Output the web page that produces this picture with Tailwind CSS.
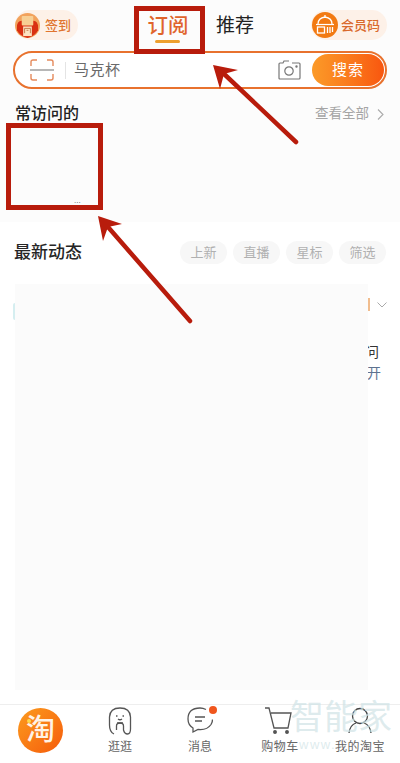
<!DOCTYPE html>
<html lang="zh">
<head>
  <meta charset="UTF-8">
  <title>订阅</title>
  <script src="https://cdn.jsdelivr.net/npm/@tailwindcss/browser@4"></script>
</head>
<body class="bg-white">
<div class="relative w-[400px] h-[763px] overflow-hidden flex flex-col bg-white font-['Liberation_Sans','Noto_Sans_CJK_SC',sans-serif]">

  <!-- top part -->
  <div class="h-[222px] bg-[#fcfcfc] shrink-0">
    <div class="h-[51px] pt-[10px] pl-[15px] pr-[13px] flex items-start justify-between">
      <div class="flex items-center h-[30px] w-[63px] rounded-full bg-[#fdf1e8]">
        <svg class="w-[25px] h-[25px] shrink-0" viewBox="0 0 26 26">
          <circle cx="13" cy="13" r="13" fill="#f2a25c"/>
          <path d="M2 15q0-7 5-7h12q5 0 5 7v3q-3 6-11 8-8-2-11-8z" fill="#d92f12"/>
          <rect x="7" y="3" width="12" height="10" rx="1" fill="#f7cf94"/>
          <rect x="8.500" y="14" width="9" height="10" fill="#fde3c2"/>
          <path d="M10 21v-5h6v5M12 18h2" stroke="#b5602c" fill="none" stroke-width=".8"/>
        </svg>
        <span class="ml-[5px] text-[13px] leading-none font-medium text-[#e0752f]">签到</span>
      </div>
      <div class="flex ml-[2px]">
        <div class="w-[62px] flex flex-col items-center">
          <span class="text-[20.500px] leading-[26px] mt-[3px] font-medium text-[#e0642c]">订阅</span>
          <span class="mt-[1px] w-[25px] h-[2.500px] rounded-full bg-[#eda02f]"></span>
        </div>
        <span class="ml-[17px] text-[19px] leading-[26px] mt-[3px] text-[#222]">推荐</span>
      </div>
      <div class="flex items-center h-[30px] w-[76px] rounded-full bg-[#fdf1e8] pl-[1px]">
        <svg class="w-[26px] h-[26px] shrink-0" viewBox="0 0 26 26" fill="none">
          <circle cx="13" cy="13" r="13" fill="#f27a12"/>
          <path d="M6 12q0-6 7-7 7 1 7 7M13 5V3" stroke="#fff" stroke-width="1.300"/>
          <path d="M4 12.500h18" stroke="#fff" stroke-width="1.200"/>
          <rect x="5.500" y="15" width="7" height="6" stroke="#fff" stroke-width="1.300"/>
          <path d="M15.500 15v6M18 15v6M20.500 15v5" stroke="#fff" stroke-width="1.300"/>
        </svg>
        <span class="ml-[3px] text-[13px] leading-none font-medium text-[#d9692c]">会员码</span>
      </div>
    </div>

    <!-- search -->
    <div class="mx-[13px] h-[38px] rounded-full border-2 border-[#e8722e] bg-white flex items-center">
      <svg class="ml-[15px] w-[24px] h-[22px] shrink-0" viewBox="0 0 24 22" fill="none" stroke="#e58a5c" stroke-width="1.400">
        <path d="M1 7V3q0-2 2-2h4M17 1h4q2 0 2 2v4M1 15v4q0 2 2 2h4M17 21h4q2 0 2-2v-4"/>
        <path d="M0 11h24" stroke="#999"/>
      </svg>
      <span class="ml-[11px] w-px h-[17px] bg-[#e4e4e4]"></span>
      <span class="ml-[8px] text-[15px] text-[#6a6a6a] tracking-[0.5px]">马克杯</span>
      <svg class="ml-auto w-[23px] h-[20px] shrink-0" viewBox="0 0 23 20" fill="none" stroke="#777" stroke-width="1.200">
        <path d="M2 3h3l1-2h5M14 3h7q1 0 1 1v14q0 1-1 1H2q-1 0-1-1V4q0-1 1-1"/>
        <circle cx="11" cy="11" r="4.200"/>
        <circle cx="18.500" cy="6.500" r=".6" fill="#777"/>
      </svg>
      <div class="ml-[11px] mr-[1px] w-[72px] h-[32px] rounded-full bg-gradient-to-r from-[#fb9a28] to-[#f8560f] flex items-center justify-center text-[15px] text-white tracking-[1px]">搜索</div>
    </div>

    <!-- frequently visited -->
    <div class="mt-[15px] pl-[15px] pr-[16px] flex items-center justify-between">
      <span class="text-[16px] leading-[20px] font-medium text-[#222]">常访问的</span>
      <div class="flex items-center">
        <span class="text-[13.500px] leading-[20px] text-[#a5a5a5]">查看全部</span>
        <svg class="ml-[8px] w-[7px] h-[11px]" viewBox="0 0 7 11" fill="none" stroke="#aaa" stroke-width="1.100"><path d="M1 .5l5 5-5 5"/></svg>
      </div>
    </div>
  </div>

  <!-- feed -->
  <div class="flex-1 relative">
    <div class="h-[61px] pl-[14px] pr-[13px] flex items-center justify-between">
      <span class="text-[17px] font-medium text-[#262626] mt-[1px]">最新动态</span>
      <div class="flex gap-[6px] text-[13px] text-[#b0b0b0] mr-[1px]">
        <span class="w-[47px] h-[23px] rounded-full bg-[#f7f7f7] flex items-center justify-center">上新</span>
        <span class="w-[47px] h-[23px] rounded-full bg-[#f7f7f7] flex items-center justify-center">直播</span>
        <span class="w-[47px] h-[23px] rounded-full bg-[#f7f7f7] flex items-center justify-center">星标</span>
        <span class="w-[47px] h-[23px] rounded-full bg-[#f7f7f7] flex items-center justify-center">筛选</span>
      </div>
    </div>
    <span class="absolute left-[365px] top-[120px] text-[14px] leading-[20px] text-[#333]">问</span>
    <span class="absolute left-[367px] top-[141px] text-[14px] leading-[20px] text-[#5d7290]">开</span>
    <div class="absolute left-[15px] top-[62px] w-[353px] h-[406px] bg-[#fbfbfb]"></div>
    <span class="absolute left-[13px] top-[81px] w-[2px] h-[17px] rounded-l-full bg-[#d5eef0]"></span>
    <span class="absolute left-[368px] top-[76px] w-[2px] h-[13px] bg-[#f1bd8e]"></span>
    <svg class="absolute left-[377px] top-[80px] w-[10px] h-[6px]" viewBox="0 0 10 6" fill="none" stroke="#aaa"><path d="M.5.5L5 5 9.5.5"/></svg>
  </div>

  <!-- tab bar -->
  <div class="h-[59px] shrink-0 border-t border-[#eeeeee] bg-white flex relative">
    <div class="w-[80px] pl-[18px] pt-[3px]">
      <div class="relative w-[45px] h-[45px] rounded-full bg-gradient-to-br from-[#fb9a1e] to-[#f55a0a] flex items-center justify-center text-[29px] leading-none font-medium text-[#fff3e6]">淘
        <span class="absolute left-[9px] top-[11px] w-[4px] h-[4px] rounded-full bg-[#ffd84a]"></span>
      </div>
    </div>
    <div class="w-[80px] flex flex-col items-center pt-[2px]">
      <svg class="w-[24px] h-[29px]" viewBox="0 0 24 29" fill="none" stroke="#555" stroke-width="1.300">
        <path d="M6 27Q1.500 25 1.500 18V10Q2 1 12 1t10.500 9v12q0 5-3 5t-4-4v-4q0-3-3.500-3T8.500 19v4"/>
        <path d="M8 9h1.500M14.500 9h1.500M10 12q2 1.500 4 0M9 16h6"/>
      </svg>
      <span class="mt-[3px] text-[12px] leading-[16px] text-[#666]">逛逛</span>
    </div>
    <div class="w-[80px] flex flex-col items-center pt-[2px] relative">
      <svg class="w-[26px] h-[29px]" viewBox="0 0 26 29" fill="none" stroke="#555" stroke-width="1.300">
        <path d="M19 2.500Q16 1 13 1 1 1 1 12q0 6 5 9v4l5-2.500q9 1 13-5 1.500-2.500 1.500-5"/>
        <path d="M8 10h10M8 14h7"/>
      </svg>
      <span class="absolute left-[49px] top-[1px] w-[8px] h-[8px] rounded-full bg-[#f0561d]"></span>
      <span class="mt-[3px] text-[12px] leading-[16px] text-[#666]">消息</span>
    </div>
    <div class="w-[80px] flex flex-col items-center pt-[2px]">
      <svg class="w-[27px] h-[29px] mr-[3px]" viewBox="0 0 27 29" fill="none" stroke="#555" stroke-width="1.300">
        <path d="M0 1h4l5 20h14l3-15H6"/>
        <circle cx="10" cy="25" r="1.300" fill="#555"/>
        <circle cx="22" cy="25" r="1.300" fill="#555"/>
      </svg>
      <span class="mt-[3px] text-[12px] leading-[16px] tracking-[0.5px] text-[#666]">购物车</span>
    </div>
    <div class="w-[80px] flex flex-col items-center pt-[2px]">
      <svg class="w-[24px] h-[29px]" viewBox="0 0 24 29" fill="none" stroke="#444" stroke-width="1.300">
        <circle cx="12" cy="9" r="7.500"/>
        <path d="M1 26q1-8 7-10M23 26q-1-8-7-10"/>
      </svg>
      <span class="mt-[3px] text-[12px] leading-[16px] tracking-[0.5px] text-[#666]">我的淘宝</span>
    </div>
  </div>

  <!-- watermark -->
  <div class="absolute left-[290px] top-[698px] text-[34px] leading-[38px] text-[#cfe3e6]/70">智能家</div>
  <div class="absolute left-[299px] top-[737px] text-[13px] leading-[16px] tracking-[1.500px] text-[#cfe3e6]/70">www.</div>

  <!-- red annotations -->
  <div class="absolute left-[134px] top-[6px] w-[71px] h-[48px] border-[5px] border-[#b81c0c]"></div>
  <div class="absolute left-[6px] top-[123px] w-[97px] h-[87px] border-[5px] border-[#b81c0c]"></div>
  <span class="absolute left-[74px] top-[198px] text-[8px] leading-[6px] text-[#555]">...</span>
  <svg class="absolute left-0 top-0 w-[400px] h-[400px]" viewBox="0 0 400 400" fill="#b81c0c">
    <path d="M296 142L222 72" stroke="#b81c0c" stroke-width="4.500" stroke-linecap="round"/>
    <path d="M213 65L238 70 224 74 220 89z"/>
    <path d="M190 321L108 227" stroke="#b81c0c" stroke-width="4.500" stroke-linecap="round"/>
    <path d="M98 216L122 224 108 227 103 241z"/>
  </svg>
</div>
</body>
</html>
